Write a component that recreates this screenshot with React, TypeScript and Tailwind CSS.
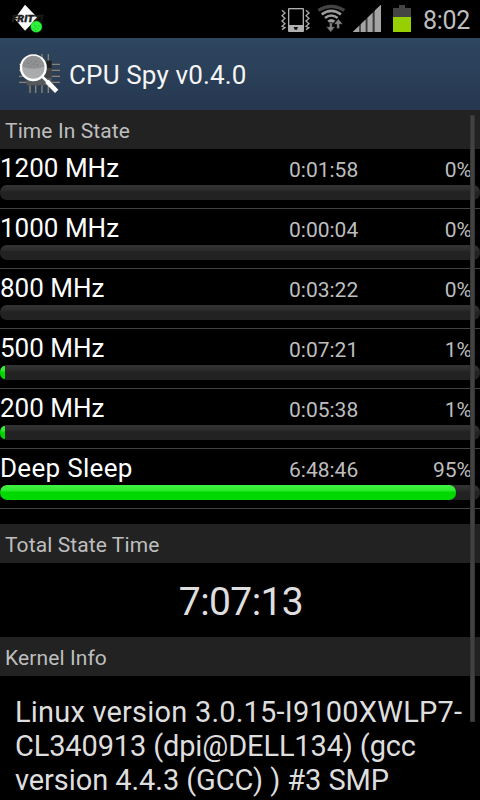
import { ReactNode } from "react";

type CpuState = {
  label: string;
  time: string;
  percent: number;
};

const STATES: CpuState[] = [
  { label: "1200 MHz", time: "0:01:58", percent: 0 },
  { label: "1000 MHz", time: "0:00:04", percent: 0 },
  { label: "800 MHz", time: "0:03:22", percent: 0 },
  { label: "500 MHz", time: "0:07:21", percent: 1 },
  { label: "200 MHz", time: "0:05:38", percent: 1 },
  { label: "Deep Sleep", time: "6:48:46", percent: 95 },
];

const App = () => {
  return (
    <div className="relative flex h-[800px] w-[480px] flex-col overflow-hidden bg-black font-[Roboto,sans-serif] text-[#dedede]">
      <StatusBar />
      <header className="flex h-[72px] shrink-0 items-start bg-linear-to-b from-[#2f4660] to-[#263850] pl-[18px]">
        <AppIcon />
        <h1 className="ml-2 mt-[19px] text-[26px] leading-[36px] tracking-[0.15px] text-[#f5f5f5]">CPU Spy v0.4.0</h1>
      </header>

      <SectionTitle>Time In State</SectionTitle>
      <ul className="mb-[15px] shrink-0">
        {STATES.map((state) => (
          <StateRow key={state.label} {...state} />
        ))}
      </ul>

      <SectionTitle>Total State Time</SectionTitle>
      <p className="h-[74px] shrink-0 pl-[2px] text-center text-[39px] leading-[78px] tracking-[-0.6px]">7:07:13</p>

      <SectionTitle>Kernel Info</SectionTitle>
      <div className="shrink-0 whitespace-nowrap pl-[15px] pt-[19px] text-[29px] leading-[34px]">
        <p className="tracking-[0.2px]">Linux version 3.0.15-I9100XWLP7-</p>
        <p className="tracking-[-0.14px]">CL340913 (dpi@DELL134) (gcc</p>
        <p className="tracking-[-0.07px]">version 4.4.3 (GCC) ) #3 SMP</p>
      </div>

      {/* Scrollbar */}
      <div className="absolute left-[470px] top-[115px] h-[607px] w-[5px] border border-[#343434] bg-[#424242]" />
    </div>
  );
};

const SectionTitle = ({ children }: { children: ReactNode }) => (
  <h2 className="h-[39px] shrink-0 bg-[#222222] pl-[5px] text-[21px] leading-[43px] tracking-[0.1px] text-[#bebebe]">
    {children}
  </h2>
);

const StateRow = ({ label, time, percent }: CpuState) => (
  <li className="h-[60px] border-b border-[#424242]">
    <div className="flex h-9 items-baseline leading-[38px]">
      <span
        className={`w-[289px] text-[26px] text-white ${label.endsWith("MHz") ? "tracking-normal" : "tracking-[0.3px]"}`}
      >
        {label}
      </span>
      <span className="text-[21px] text-[#bebebe]">{time}</span>
      <span className="ml-auto pr-2 text-[21px] text-[#bebebe]">{percent}%</span>
    </div>
    <div className="h-[15px] overflow-hidden rounded-[7px] bg-linear-to-b from-[#323232] from-10% via-[#292929] via-40% to-[#222222] to-45%">
      <div
        className="h-full rounded-[7px] bg-linear-to-b from-[#3df03d] from-10% via-[#2aea2a] via-40% to-[#00d900] to-45%"
        style={{ width: `${percent}%` }}
      />
    </div>
  </li>
);

const StatusBar = () => (
  <div className="flex h-[38px] shrink-0 items-start pl-[11px] pt-1">
    <FritzIcon />
    <div className="ml-[237px] flex items-start">
      <VibrateIcon />
      <WifiIcon />
      <SignalIcon />
      <BatteryIcon />
      <span className="ml-3 text-[25px] leading-[33px] tracking-[-0.3px] text-[#bebebe]">8:02</span>
    </div>
  </div>
);

const FritzIcon = () => (
  <svg viewBox="33 12 99 90" className="h-[30px] w-[33px]">
    <path d="M75 14 L113 53 L75 92 L44 56Z" fill="#fafafa" />
    <text
      x="35"
      y="66"
      fontSize="28"
      fontWeight="900"
      fontStyle="italic"
      textLength="94"
      lengthAdjust="spacingAndGlyphs"
      fill="#1d1d1d"
      stroke="#1d1d1d"
      strokeWidth="1"
    >
      FRITZ!
    </text>
    <circle cx="109" cy="80" r="17" fill="#2ff53c" stroke="#0b9a18" strokeWidth="1.5" />
    <path d="M100 86h3M106 81h3M112 86h3M106 91h3M103 76h3M115 78h3" stroke="#14a020" strokeWidth="3" />
  </svg>
);

const VibrateIcon = () => (
  <svg viewBox="33 12 87 87" className="h-[29px] w-[29px]">
    <rect x="54" y="24" width="48" height="72" rx="3" fill="#b0b0b0" />
    <rect x="58" y="28" width="40" height="47" fill="#000" />
    <path d="M71 81h13l-3 8h-7z" fill="#111" />
    <g fill="none" stroke="#a8a8a8" strokeWidth="4">
      <path d="M36 31l9 8-9 8 9 8-9 8 9 8-9 8 9 4-9 6" />
      <path d="M108 31l9 8-9 8 9 8-9 8 9 8-9 8 9 4-9 6" />
    </g>
  </svg>
);

const WifiIcon = () => (
  <svg viewBox="141 12 87 87" className="ml-[7px] h-[29px] w-[29px]">
    <g fill="none">
      <path d="M145 31Q184 7 223 31" stroke="#444" strokeWidth="10" />
      <path d="M155 43Q184 22 213 43" stroke="#9b9b9b" strokeWidth="8" />
      <path d="M165 54Q184 39 203 54" stroke="#9b9b9b" strokeWidth="8" />
    </g>
    <path d="M172 62Q184 52 196 62L184 74Z" fill="#9b9b9b" />
    <path d="M178 68h9v12h9l-14 17-14-17h10z" fill="#808080" stroke="#000" strokeWidth="2" />
    <path d="M200 86v-13h-9l14-17 14 17h-10v13z" fill="#808080" stroke="#000" strokeWidth="2" />
  </svg>
);

const SignalIcon = () => (
  <svg viewBox="246 12 90 87" className="ml-1.5 h-[29px] w-[30px]">
    <path d="M248 96L333 14V96Z" fill="#666" />
    <g fill="#a4a4a4">
      <path d="M248 96L267 78V96Z" />
      <path d="M273 96V72L286 59V96Z" />
      <path d="M293 96V53L307 39V96Z" />
      <path d="M315 96V31L333 14V96Z" />
    </g>
    <path d="M270 96V75M290 96V56M311 96V35" stroke="#333" strokeWidth="3" />
  </svg>
);

const BatteryIcon = () => (
  <svg viewBox="369 12 54 87" className="ml-[11px] h-[29px] w-[18px]">
    <path d="M387 15h18v9h18v27h-54V24h18z" fill="#444" />
    <rect x="369" y="51" width="54" height="45" fill="#96cf02" />
  </svg>
);

const AppIcon = () => (
  <svg viewBox="54 51 129 123" className="mt-[15px] h-[41px] w-[43px]">
    {/* Chip with its pins */}
    <g stroke="#3a3f44" strokeWidth="9">
      <path d="M90 54v117M107 54v117M126 54v117M145 54v117" />
      <path d="M57 85h123M57 103h123M57 121h123M57 139h123" />
    </g>
    <g stroke="#7d858b" strokeWidth="4">
      <path d="M90 54v117M107 54v117M126 54v117M145 54v117" />
      <path d="M57 85h123M57 103h123M57 121h123M57 139h123" />
    </g>
    <rect x="80" y="74" width="75" height="74" fill="#3f4142" />
    <path d="M80 126h75v22H80z" fill="#56595b" />
    <path d="M140 74h15v22h-15z" fill="#1f2022" />
    {/* Magnifying glass */}
    <circle cx="100" cy="95" r="37" fill="#a9abac" stroke="#fff" strokeWidth="7" />
    <path d="M67 92A33 33 0 0 1 133 92Q100 104 67 92Z" fill="#8f9193" />
    <path d="M82 82h4M91 77h4M99 84h4M105 76h4M89 90h4M110 86h4" stroke="#74777a" strokeWidth="3" />
    <path d="M127 122L143 138" stroke="#fff" strokeWidth="8" />
    <path d="M141 136L170 166" stroke="#fff" strokeWidth="14" />
  </svg>
);

export default App;
